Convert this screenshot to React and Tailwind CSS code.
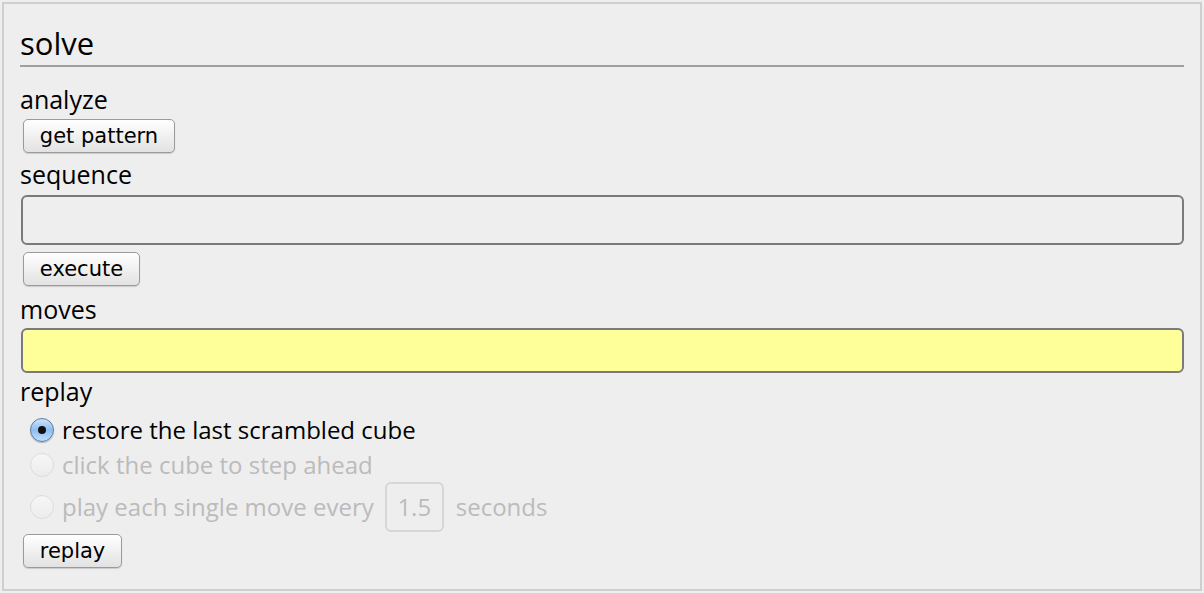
import { useState } from 'react';

const label = "block pt-[3px] text-[25px] leading-[27px] text-black";
const btn =
  "block h-[34px] rounded-[5px] border border-[#9a9a9a] bg-gradient-to-b from-white to-[#e2e2e2] shadow-[0_1px_1px_rgba(0,0,0,0.15)] font-['DejaVu_Sans',sans-serif] text-[21px] leading-[31px] text-black text-center";

function Radio({ checked }) {
  if (checked) {
    return (
      <span className="flex h-[24px] w-[24px] shrink-0 items-center justify-center rounded-full border border-[#5a7ca8] bg-gradient-to-b from-[#cfe3fa] via-[#8fbdf0] to-[#bfe0ff] shadow-[0_1px_1px_rgba(0,0,0,0.25)]">
        <span className="h-[8px] w-[8px] rounded-full bg-[#111]" />
      </span>
    );
  }
  return (
    <span className="block h-[24px] w-[24px] shrink-0 rounded-full border border-[#dcdcdc] bg-gradient-to-b from-[#f6f6f6] to-[#ececec]" />
  );
}

export default function App() {
  const [mode, setMode] = useState('restore');

  return (
    <div className="h-[593px] w-[1204px] bg-[#eeeeee] p-[2px] font-['Open_Sans',sans-serif]">
      <div className="h-[589px] w-[1200px] border-2 border-[#cfcfcf] bg-[#eeeeee] px-[16px] pt-[21px]">
        {/* header */}
        <div className="border-b-2 border-[#a0a0a0] pb-[4px] text-[31px] leading-[36px] text-black">
          solve
        </div>

        <span className={`${label} mt-[16px]`}>analyze</span>
        <button className={`${btn} ml-[3px] mt-[6px] w-[152px]`}>get pattern</button>

        <span className={`${label} mt-[5px]`}>sequence</span>
        <input className="mt-[7px] ml-[1px] block h-[50px] w-[1163px] rounded-[6px] border-2 border-[#7a7a7a] bg-[#eeeeee] px-2 text-[22px] outline-none" />
        <button className={`${btn} ml-[3px] mt-[7px] w-[117px]`}>execute</button>

        <span className={`${label} mt-[7px]`}>moves</span>
        <input className="mt-[5px] ml-[1px] block h-[45px] w-[1163px] rounded-[6px] border-2 border-[#7a7a7a] bg-[#ffff99] px-2 text-[22px] outline-none" />

        <span className={`${label} mt-[2px]`}>replay</span>

        {/* replay modes */}
        <div className="mt-[7px] ml-[10px] text-[24px]">
          <label className="flex h-[35px] items-center gap-[8px] text-black" onClick={() => setMode('restore')}>
            <Radio checked={mode === 'restore'} />
            <span>restore the last scrambled cube</span>
          </label>
          <label className="flex h-[35px] items-center gap-[8px] text-[#bbbbbb]">
            <Radio />
            <span>click the cube to step ahead</span>
          </label>
          <label className="flex h-[50px] items-center gap-[8px] text-[#bbbbbb]">
            <Radio />
            <span>play each single move every</span>
            <span className="ml-[3px] flex h-[50px] w-[59px] items-center justify-center rounded-[6px] border-2 border-[#d6d6d6] text-[#bbbbbb]">
              1.5
            </span>
            <span className="ml-[4px]">seconds</span>
          </label>
        </div>

        <button className={`${btn} ml-[3px] mt-[2px] w-[99px]`}>replay</button>
      </div>
    </div>
  );
}
